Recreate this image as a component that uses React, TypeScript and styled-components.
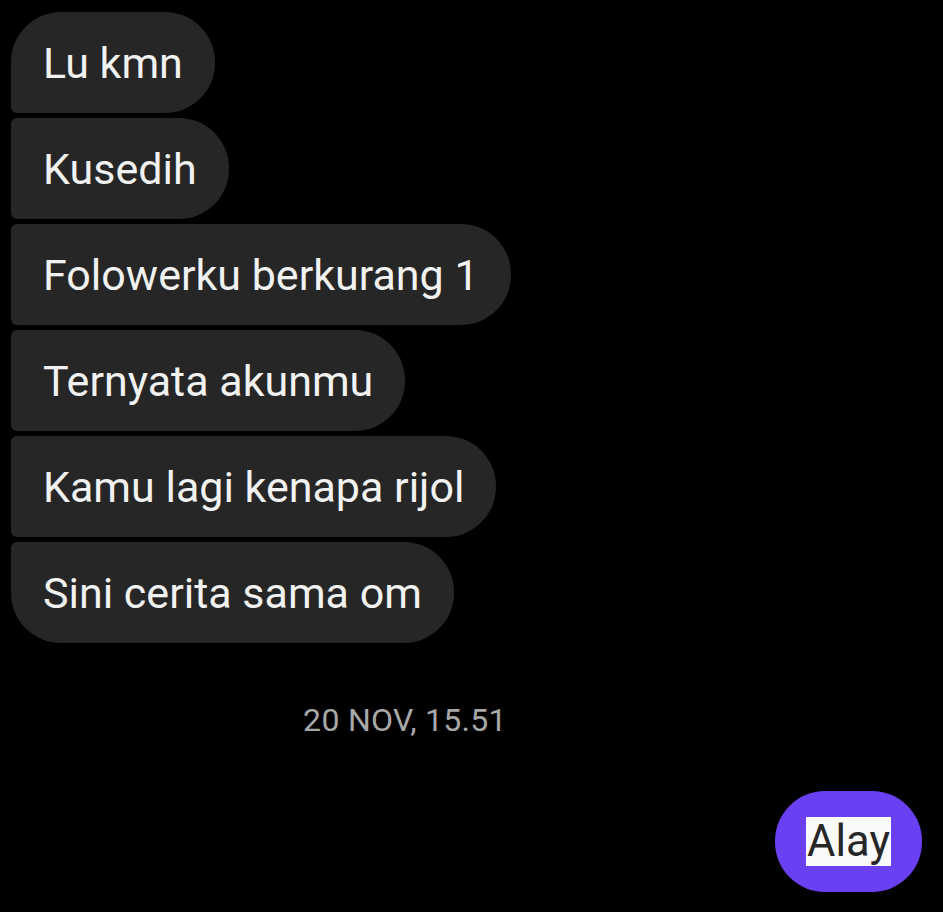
import React from 'react';
import styled, { createGlobalStyle, css } from 'styled-components';

const GlobalStyle = createGlobalStyle`
  html, body {
    margin: 0;
    padding: 0;
    background: #000;
  }
  body {
    font-family: Roboto, "Noto Sans", sans-serif;
  }
`;

const Screen = styled.div`
  width: 943px;
  height: 912px;
  background: #000;
  display: flex;
  flex-direction: column;
  overflow: hidden;
`;

const Thread = styled.div`
  display: flex;
  flex-direction: column;
  align-items: flex-start;
  gap: 5px;
  padding: 12px 0 0 11px;
`;

type Position = 'first' | 'middle' | 'last';

const cornerStyles = {
  first: css`
    border-radius: 50px 50px 50px 6px;
  `,
  middle: css`
    border-radius: 6px 50px 50px 6px;
  `,
  last: css`
    border-radius: 6px 50px 50px 50px;
  `,
};

const Bubble = styled.div<{ $pos: Position }>`
  height: 101px;
  box-sizing: border-box;
  display: flex;
  align-items: center;
  padding: 0 32px;
  background: #262626;
  color: #f2f2f2;
  font-size: 43px;
  white-space: nowrap;
  ${(props) => cornerStyles[props.$pos]}
`;

const Timestamp = styled.div`
  margin-top: 58px;
  padding-right: 133px;
  text-align: center;
  color: #a8a8a8;
  font-size: 32px;
  letter-spacing: 0.3px;
`;

const OutgoingRow = styled.div`
  display: flex;
  justify-content: flex-end;
  padding-right: 21px;
  margin-top: 52px;
`;

const OwnBubble = styled.div`
  height: 101px;
  box-sizing: border-box;
  display: flex;
  align-items: center;
  padding: 0 31px;
  border-radius: 50px;
  background: #6b3ff2;
  font-size: 43.5px;
`;

const Selected = styled.span`
  background: #fafafa;
  color: #262626;
  padding: 0 1px;
  line-height: 49px;
`;

const messages = [
  'Lu kmn',
  'Kusedih',
  'Folowerku berkurang 1',
  'Ternyata akunmu',
  'Kamu lagi kenapa rijol',
  'Sini cerita sama om',
];

export default function App() {
  return (
    <Screen>
      <GlobalStyle />
      <Thread>
        {messages.map((text, i) => (
          <Bubble
            key={text}
            $pos={i === 0 ? 'first' : i === messages.length - 1 ? 'last' : 'middle'}
          >
            {text}
          </Bubble>
        ))}
      </Thread>
      <Timestamp>20 NOV, 15.51</Timestamp>
      <OutgoingRow>
        <OwnBubble>
          <Selected>Alay</Selected>
        </OwnBubble>
      </OutgoingRow>
    </Screen>
  );
}
